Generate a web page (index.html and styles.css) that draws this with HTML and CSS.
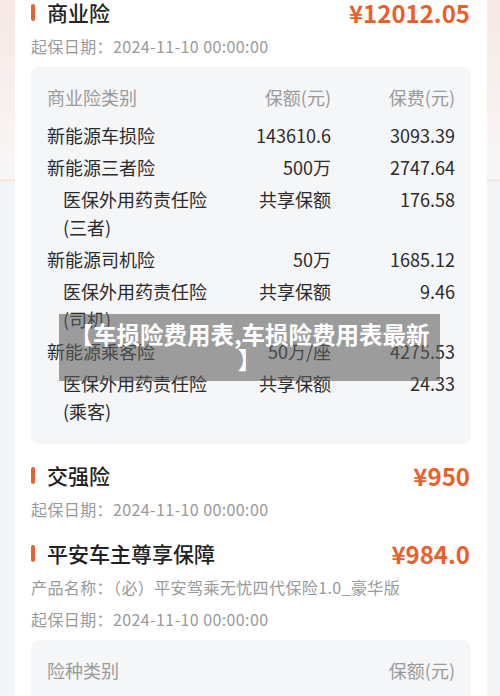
FILE: index.html
```html
<!DOCTYPE html>
<html lang="zh-CN">
<head>
<meta charset="UTF-8">
<meta name="viewport" content="width=device-width, initial-scale=1.0">
<title>车损险费用表</title>
<link rel="stylesheet" href="styles.css">
</head>
<body>

<div class="card">

  <div class="section">
    <div class="sec-head">
      <div class="sec-title"><span class="bar"></span>商业险</div>
      <div class="price">¥12012.05</div>
    </div>
    <div class="meta">起保日期：2024-11-10 00:00:00</div>
    <div class="box">
      <div class="row head">
        <span>商业险类别</span>
        <span class="num">保额(元)</span>
        <span class="num">保费(元)</span>
      </div>
      <div class="row">
        <span>新能源车损险</span>
        <span class="num">143610.6</span>
        <span class="num">3093.39</span>
      </div>
      <div class="row">
        <span>新能源三者险</span>
        <span class="num">500万</span>
        <span class="num">2747.64</span>
      </div>
      <div class="row sub">
        <span>医保外用药责任险(三者)</span>
        <span class="num">共享保额</span>
        <span class="num">176.58</span>
      </div>
      <div class="row">
        <span>新能源司机险</span>
        <span class="num">50万</span>
        <span class="num">1685.12</span>
      </div>
      <div class="row sub">
        <span>医保外用药责任险(司机)</span>
        <span class="num">共享保额</span>
        <span class="num">9.46</span>
      </div>
      <div class="row">
        <span>新能源乘客险</span>
        <span class="num">50万/座</span>
        <span class="num">4275.53</span>
      </div>
      <div class="row sub">
        <span>医保外用药责任险(乘客)</span>
        <span class="num">共享保额</span>
        <span class="num">24.33</span>
      </div>
    </div>
  </div>

  <div class="section">
    <div class="sec-head">
      <div class="sec-title"><span class="bar"></span>交强险</div>
      <div class="price">¥950</div>
    </div>
    <div class="meta">起保日期：2024-11-10 00:00:00</div>
  </div>

  <div class="section">
    <div class="sec-head">
      <div class="sec-title"><span class="bar"></span>平安车主尊享保障</div>
      <div class="price">¥984.0</div>
    </div>
    <div class="meta">产品名称：（必）平安驾乘无忧四代保险1.0_豪华版</div>
    <div class="meta">起保日期：2024-11-10 00:00:00</div>
    <div class="box">
      <div class="row two head">
        <span>险种类别</span>
        <span class="num">保额(元)</span>
      </div>
      <div class="row two">
        <span>驾乘意外险</span>
        <span class="num">20万</span>
      </div>
    </div>
  </div>

</div>

<div class="banner">【车损险费用表,车损险费用表最新<br>】</div>

</body>
</html>
```

FILE: styles.css
```css
body {
  margin: 0;
  height: 696px;
  overflow: hidden;
  font-family: "Noto Sans CJK SC", "Noto Sans", sans-serif;
  color: #333;
  background: linear-gradient(180deg, #f6e8e4 0, #f8f2f1 120px, #f8f7f8 179px, #f3e6dc 180px, #f3e6dc 181px, #f4f5f7 182px);
}

.card {
  margin: -16px 13px 0 15px;
  padding: 16px 16px 0;
  background: #fff;
  border-radius: 10px;
  height: 760px;
}

.section + .section {
  padding-top: 16px;
}

.sec-head {
  display: flex;
  justify-content: space-between;
  align-items: center;
  height: 24px;
  margin-bottom: 6px;
}

.sec-title {
  display: flex;
  align-items: center;
  font-size: 21px;
  font-weight: 500;
  color: #222;
}

.bar {
  width: 4px;
  height: 17px;
  border-radius: 2px;
  background: #e8612e;
  margin-right: 12px;
}

.price {
  font-size: 24px;
  font-weight: 700;
  color: #eb5f2a;
  margin-right: 1px;
}

.meta {
  font-size: 16px;
  line-height: 32px;
  letter-spacing: 0.4px;
  color: #9a9a9a;
}

.box {
  margin: 5px 0 3px;
  padding: 16px 16px 19px;
  background: #f5f6f8;
  border-radius: 8px;
  display: flex;
  flex-direction: column;
  gap: 4px;
}

.row {
  display: grid;
  grid-template-columns: 168px 1fr 124px;
  font-size: 18px;
  line-height: 28px;
  color: #2b2b2b;
}

.row.two {
  grid-template-columns: 1fr 124px;
}

.row.head {
  color: #9a9a9a;
  margin-bottom: 6px;
}

.row.sub span:first-child {
  padding-left: 16px;
}

.num {
  text-align: right;
}

.banner {
  position: absolute;
  left: 59px;
  top: 314px;
  width: 371px;
  padding: 8px 5px 9px;
  background: rgba(92, 92, 92, 0.58);
  color: #fff;
  font-size: 23.5px;
  font-weight: 700;
  line-height: 25px;
  text-align: center;
  white-space: nowrap;
}
```
